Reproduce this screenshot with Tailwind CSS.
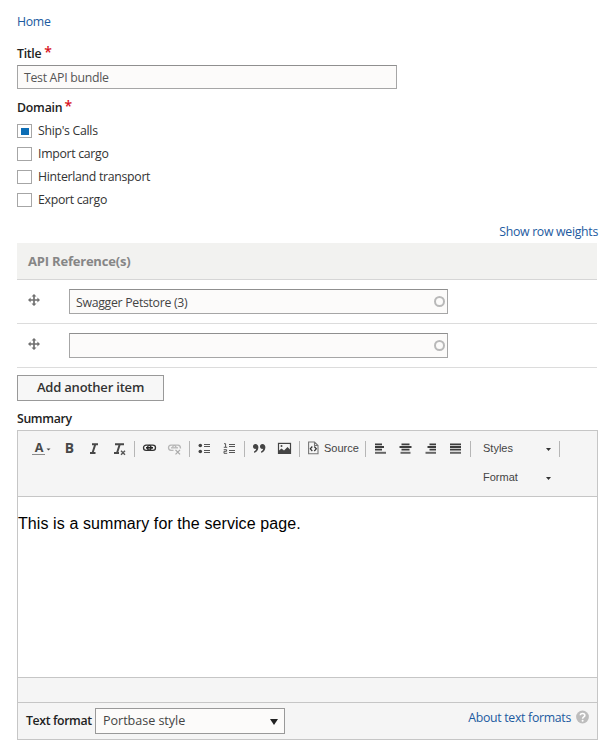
<!DOCTYPE html>
<html lang="en">
<head>
<meta charset="utf-8">
<title>Edit API bundle</title>
<script src="https://cdn.jsdelivr.net/npm/@tailwindcss/browser@4"></script>
</head>
<body class="h-[740px] w-[610px] overflow-hidden bg-white pl-[17px] font-['Open_Sans',sans-serif] text-[12.3px] tracking-[-0.3px] text-[#333]">
<div class="flex w-[581px] flex-col">
  <a class="mt-[12px] block h-[20px] leading-[20px] text-[#1c5aa0]">Home</a>
  <label class="mt-[12px] flex h-[20px] font-semibold leading-[20px] text-[#222]">Title<span class="ml-[3px] text-[14px] leading-[16px] text-[#d8101c]">*</span></label>
  <div class="mt-[1px] h-[24px] w-[380px] border border-[#a6a6a6] border-t-[#8f8f8f] bg-[#fcfbfa] pl-[6px] leading-[23px] text-[#555]">Test API bundle</div>
  <label class="mt-[9px] flex h-[20px] font-semibold leading-[20px] tracking-[-0.2px] text-[#222]">Domain<span class="ml-[2px] text-[14px] leading-[16px] text-[#d8101c]">*</span></label>
  <div class="mt-[2px] flex flex-col">
    <label class="flex h-[23px] items-start gap-[6px] pt-[4px] leading-[13px]"><span class="flex h-[14px] w-[15px] items-center justify-center border border-[#a6a6a6] bg-white"><span class="h-[7px] w-[8px] bg-[#0c6db5]"></span></span>Ship's Calls</label>
    <label class="flex h-[23px] items-start gap-[6px] pt-[4px] leading-[13px]"><span class="h-[14px] w-[15px] border border-[#a6a6a6] bg-white"></span>Import cargo</label>
    <label class="flex h-[23px] items-start gap-[6px] pt-[4px] leading-[13px]"><span class="h-[14px] w-[15px] border border-[#a6a6a6] bg-white"></span>Hinterland transport</label>
    <label class="flex h-[23px] items-start gap-[6px] pt-[4px] leading-[13px]"><span class="h-[14px] w-[15px] border border-[#a6a6a6] bg-white"></span>Export cargo</label>
  </div>
  <a class="mt-[10px] block h-[21px] text-right leading-[20px] text-[#1c5aa0]">Show row weights</a>

  <div class="flex w-[580px] flex-col">
    <div class="h-[37px] border-b border-[#d6d6d6] bg-[#f2f2f0] pl-[11px] text-[13px] font-bold leading-[37px] tracking-[-0.2px] text-[#868686]">API Reference(s)</div>
    <div class="flex h-[44px] items-start border-b border-[#dcdcdc] pt-[9px]">
      <svg class="ml-[11px] mt-[5px] mr-[29px]" width="12" height="12" viewBox="0 0 12 12"><path d="M6 2V10M2 6H10" stroke="#707070" stroke-width="1.7"/><path d="M6 0L8.5 2.6H3.5ZM6 12L8.5 9.4H3.5ZM0 6L2.6 3.5V8.5ZM12 6L9.4 3.5V8.5Z" fill="#707070"/></svg>
      <div class="flex h-[25px] w-[379px] justify-between border border-[#a6a6a6] border-t-[#8f8f8f] bg-[#fcfbfa] pl-[6px] leading-[25px] text-[#444]">Swagger Petstore (3)<span class="mr-[2px] mt-[6px] size-[11px] rounded-full border-2 border-[#b9b9b9]"></span></div>
    </div>
    <div class="flex h-[44px] items-start border-b border-[#dcdcdc] pt-[9px]">
      <svg class="ml-[11px] mt-[5px] mr-[29px]" width="12" height="12" viewBox="0 0 12 12"><path d="M6 2V10M2 6H10" stroke="#707070" stroke-width="1.7"/><path d="M6 0L8.5 2.6H3.5ZM6 12L8.5 9.4H3.5ZM0 6L2.6 3.5V8.5ZM12 6L9.4 3.5V8.5Z" fill="#707070"/></svg>
      <div class="flex h-[25px] w-[379px] justify-end border border-[#a6a6a6] border-t-[#8f8f8f] bg-[#fcfbfa]"><span class="mr-[2px] mt-[6px] size-[11px] rounded-full border-2 border-[#b9b9b9]"></span></div>
    </div>
  </div>

  <button class="mt-[7px] h-[26px] w-[147px] border border-[#999] bg-[#f7f7f7] pb-[2px] text-[13px] font-semibold leading-[22px] tracking-[-0.2px] text-[#333]">Add another item</button>
  <label class="mt-[8px] block h-[21px] font-semibold leading-[20px] tracking-[-0.35px] text-[#222]">Summary</label>

  <div class="h-[310px] w-[581px] border border-[#c6c6c6] bg-white">
    <div class="flex h-[66px] flex-col border-b border-[#c6c6c6] bg-[#f5f5f5] pl-[10px] font-['Liberation_Sans',sans-serif] text-[11px] tracking-normal text-[#444]">
      <div class="mt-[8px] flex h-[20px] items-center">
        <svg width="29" height="20" viewBox="0 0 29 20"><text x="11" y="13" text-anchor="middle" font-family="Open Sans" font-weight="700" font-size="12.6" letter-spacing="0" fill="#484848">A</text><path d="M4 15.5H17" stroke="#8a8a8a"/><path d="M18.5 9.5H22.5L20.5 11.5Z" fill="#444"/></svg>
        <svg width="25" height="20" viewBox="0 0 25 20"><text x="12.5" y="14" text-anchor="middle" font-family="Open Sans" font-weight="700" font-size="13.8" letter-spacing="0" fill="#484848">B</text></svg>
        <svg width="25" height="20" viewBox="0 0 25 20"><path d="M10 5.2H16M8 14H13.5M13.3 5.2L10.5 14" stroke="#484848" stroke-width="2" fill="none"/></svg>
        <svg width="25" height="20" viewBox="0 0 25 20"><path d="M8 5.2H17M7 14H12M12.8 5.2L10 14" stroke="#484848" stroke-width="2" fill="none"/><path d="M14 11.7L18 15.7M18 11.7L14 15.7" stroke="#555" stroke-width="1.4"/></svg>
        <span class="mx-[2px] h-[16px] w-px bg-[#b6b6b6]"></span>
        <svg width="25" height="20" viewBox="0 -.4 25 20"><g fill="none" stroke="#333" stroke-width="1.3"><rect x="6.5" y="5.8" width="7.5" height="5.2" rx="2.6"/><rect x="10.5" y="5.8" width="8" height="5.2" rx="2.6"/></g><path d="M9 8.4H16" stroke="#222" stroke-width="1.6"/></svg>
        <svg width="25" height="20" viewBox="0 -.4 25 20"><g fill="none" stroke="#b7b7b7" stroke-width="1.3"><path d="M11.5 11H9Q6.5 10.7 6.5 8.4Q6.5 6 9 5.8H11.5Q14 6 14 8.4"/><path d="M10.5 8Q11 5.8 13 5.8H16Q18.5 6 18.5 9"/><path d="M9 8.4H16"/></g><path d="M13.5 10.5L18 15M18 10.5L13.5 15" stroke="#aaa" stroke-width="1.3"/></svg>
        <span class="mx-[2px] h-[16px] w-px bg-[#b6b6b6]"></span>
        <svg width="25" height="20" viewBox="0 .5 25 20"><circle cx="8.3" cy="7" r="1.8" fill="#444"/><circle cx="8.3" cy="13" r="1.8" fill="#444"/><path d="M12 6H18M12 8H18M12 12H18M12 14H18" stroke="#555" stroke-width="1.1"/></svg>
        <svg width="25" height="20" viewBox="0 .5 25 20"><path d="M7 5.2H8.6V8.5M6.8 8.8H10.2M6.7 11.2H9.6V12.8H7V14.8H10.2" stroke="#555" fill="none"/><path d="M12 6H18M12 8H18M12 12H18M12 14H18" stroke="#555" stroke-width="1.1"/></svg>
        <span class="mx-[2px] h-[16px] w-px bg-[#b6b6b6]"></span>
        <svg width="25" height="20" viewBox="0 .5 25 20"><g fill="#444"><path id="q" d="M8.4 5.5C10.2 5.5 11.4 6.8 11.4 8.7C11.4 11.6 9.5 13.7 7 14.3V12.9C8.3 12.4 9.1 11.5 9.2 10.3C7.3 10.8 6 9.6 6 8C6 6.6 7 5.5 8.4 5.5Z"/><use href="#q" x="7"/></g></svg>
        <svg width="25" height="20" viewBox="0 .6 25 20"><rect x="6.5" y="5" width="12" height="10" fill="#f5f5f5" stroke="#444" stroke-width="1.2"/><path d="M7 14.5V12L9.5 10L12 12L15.5 8.5L18 11V14.5Z" fill="#444"/><circle cx="9.5" cy="7.7" r="1" fill="#444"/></svg>
        <span class="mx-[2px] h-[16px] w-px bg-[#b6b6b6]"></span>
        <span class="flex w-[61px] items-center pb-[2px] pl-[6px]"><svg width="11" height="14" viewBox="0 0 11 14"><path d="M.6 1H6.5L10 4.5V12.8H.6ZM6.5 1V4.5H10" fill="none" stroke="#777" stroke-width="1.1"/><path d="M4.3 5.5L2.3 7.8L4.3 10M6.3 5.5L8.3 7.8L6.3 10" fill="none" stroke="#333" stroke-width="1.2"/></svg><span class="ml-[5px]">Source</span></span>
        <span class="mx-[2px] h-[16px] w-px bg-[#b6b6b6]"></span>
        <svg width="25" height="20" viewBox="0 .2 25 20"><path d="M7 5.5H14M7 8.2H16M7 10.8H14" stroke="#3c3c3c" stroke-width="1.8"/><path d="M7 14H18" stroke="#666" stroke-width="2"/></svg>
        <svg width="25" height="20" viewBox="0 .2 25 20"><path d="M8.5 5.5H16.5M6.5 8.2H18.5M8.5 10.8H16.5" stroke="#3c3c3c" stroke-width="1.8"/><path d="M7.5 14H17.5" stroke="#666" stroke-width="2"/></svg>
        <svg width="25" height="20" viewBox="0 .2 25 20"><path d="M11.5 5.5H18M9.5 8.2H18M11.5 10.8H18" stroke="#3c3c3c" stroke-width="1.8"/><path d="M7.5 14H18" stroke="#666" stroke-width="2"/></svg>
        <svg width="25" height="20" viewBox="0 .2 25 20"><path d="M7 5.5H18M7 8.2H18M7 10.8H18" stroke="#3c3c3c" stroke-width="1.8"/><path d="M7 14H18" stroke="#666" stroke-width="2"/></svg>
        <span class="mx-[2px] h-[16px] w-px bg-[#b6b6b6]"></span>
        <span class="flex w-[84px] items-center justify-between pb-[2px] pl-[10px] pr-[6px]">Styles<svg class="mt-[2px]" width="5" height="3" viewBox="0 0 5 3"><path d="M0 0H5L2.5 3Z" fill="#333"/></svg></span>
        <span class="ml-[2px] h-[16px] w-px bg-[#b6b6b6]"></span>
      </div>
      <div class="ml-[455px] mt-[8px] flex h-[20px] w-[68px] items-center justify-between">Format<svg class="mt-[2px]" width="5" height="3" viewBox="0 0 5 3"><path d="M0 0H5L2.5 3Z" fill="#333"/></svg></div>
    </div>
    <div class="h-[180px] pt-[16px] font-['Liberation_Sans',sans-serif] text-[16px] leading-[22px] tracking-[0.09px] text-black">This is a summary for the service page.</div>
    <div class="h-[25px] border-t border-[#c6c6c6] bg-[#f5f5f5]"></div>
    <div class="flex h-[37px] items-start border-t border-[#c6c6c6] bg-[#f5f5f5] pl-[8px]">
      <span class="mt-[8px] w-[69px] whitespace-nowrap font-semibold leading-[20px] tracking-[-0.38px] text-[#222]">Text format</span>
      <div class="mt-[5px] flex h-[26px] w-[190px] items-center justify-between border border-[#999] bg-[#fcfbfa] pl-[7px] pr-[6px] text-[12.6px] tracking-[-0.05px] text-[#444]">Portbase style<svg class="mt-[2px]" width="8" height="6" viewBox="0 0 8 6"><path d="M0 0H8L4 6Z" fill="#222"/></svg></div>
      <a class="ml-auto mt-[5px] leading-[20px] text-[#1c5aa0]">About text formats</a>
      <svg class="ml-[5px] mr-[8px] mt-[7px]" width="13" height="14" viewBox="0 0 13 14"><circle cx="6.5" cy="7" r="6.4" fill="#bdbdbd"/><path d="M4.3 5.3C4.3 2.8 8.8 2.8 8.8 5.4C8.8 7 6.6 6.9 6.6 8.7" fill="none" stroke="#fff" stroke-width="1.6"/><circle cx="6.6" cy="10.7" r="1" fill="#fff"/></svg>
    </div>
  </div>
</div>
</body>
</html>
